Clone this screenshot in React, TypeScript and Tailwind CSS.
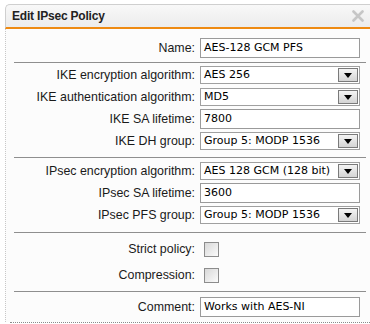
import React from "react";

type Row =
  | { kind: "text"; label: string; value: string }
  | { kind: "select"; label: string; value: string }
  | { kind: "check"; label: string };

const sections: { rows: Row[]; pt: string; pb: string; rowH: string }[] = [
  { pt: "pt-[8px]", pb: "pb-[3px]", rowH: "h-[22px]", rows: [{ kind: "text", label: "Name:", value: "AES-128 GCM PFS" }] },
  {
    pt: "pt-[1px]",
    pb: "pb-[5px]",
    rowH: "h-[22px]",
    rows: [
      { kind: "select", label: "IKE encryption algorithm:", value: "AES 256" },
      { kind: "select", label: "IKE authentication algorithm:", value: "MD5" },
      { kind: "text", label: "IKE SA lifetime:", value: "7800" },
      { kind: "select", label: "IKE DH group:", value: "Group 5: MODP 1536" },
    ],
  },
  {
    pt: "pt-[2px]",
    pb: "pb-[6px]",
    rowH: "h-[22px]",
    rows: [
      { kind: "select", label: "IPsec encryption algorithm:", value: "AES 128 GCM (128 bit)" },
      { kind: "text", label: "IPsec SA lifetime:", value: "3600" },
      { kind: "select", label: "IPsec PFS group:", value: "Group 5: MODP 1536" },
    ],
  },
  {
    pt: "pt-[3px]",
    pb: "pb-[3px]",
    rowH: "h-[26px]",
    rows: [
      { kind: "check", label: "Strict policy:" },
      { kind: "check", label: "Compression:" },
    ],
  },
  { pt: "pt-[4px]", pb: "pb-[4px]", rowH: "h-[22px]", rows: [{ kind: "text", label: "Comment:", value: "Works with AES-NI" }] },
];

const valueFont = { fontFamily: '"DejaVu Sans", Verdana, sans-serif' };

function Field({ row }: { row: Row }) {
  if (row.kind === "text") {
    return (
      <div className="w-[160px] h-[20px] border border-[#9a9a9a] bg-white flex items-center pl-[3px] text-[11px] text-black" style={valueFont}>
        {row.value}
      </div>
    );
  }
  if (row.kind === "select") {
    return (
      <div className="w-[160px] h-[18px] border border-[#a0a0a0] bg-white flex items-center justify-between pl-[3px] pr-[1px] text-[11px] text-black" style={valueFont}>
        <span className="whitespace-nowrap">{row.value}</span>
        <div className="w-[20px] h-[14px] border border-[#7a7a7a] bg-gradient-to-b from-[#f4f4f4] to-[#d4d4d4] flex items-center justify-center">
          <svg width="8" height="5" viewBox="0 0 8 5">
            <path d="M0 0 H8 L4 5 Z" fill="#000" />
          </svg>
        </div>
      </div>
    );
  }
  return <div className="w-[15px] h-[15px] ml-[4px] border border-[#8c8c8c] bg-gradient-to-br from-[#d8d8d8] to-[#fbfbfb]" />;
}

export default function App() {
  return (
    <div className="w-[370px] h-[324px] bg-white pt-[4px] pl-[5px] overflow-hidden" style={{ fontFamily: '"Liberation Sans", Arial, sans-serif' }}>
      <div className="flex flex-col">
        {/* header */}
        <div className="h-[25px] rounded-tl-[5px] border-t border-l border-[#cfcfcf] bg-gradient-to-b from-[#f8f8f8] to-[#ececec] border-b-2 border-b-[#ee8a12] flex items-center justify-between pl-[6px] pr-[6px]">
          <span className="text-[12px] font-bold text-[#222] tracking-[-0.2px]">Edit IPsec Policy</span>
          <svg width="12" height="12" viewBox="0 0 12 12" className="mb-[1px]">
            <path d="M1.5 1.5 L10.5 10.5 M10.5 1.5 L1.5 10.5" stroke="#c6c6c6" strokeWidth="2.6" strokeLinecap="round" />
          </svg>
        </div>

        {/* body */}
        <div className="border-l border-dotted border-[#c8c8c8] bg-[#fcfcfc] text-[12.4px] text-[#1a1a1a]">
          {sections.map((s, i) => (
            <div key={i}>
              {i > 0 && <div className="ml-[8px] mr-[4px] h-px bg-[#8f8f8f]" />}
              <div className={`${s.pt} ${s.pb}`}>
                {s.rows.map((r) => (
                  <div key={r.label} className={`${s.rowH} flex items-center gap-[5px]`}>
                    <div className="w-[189px] text-right whitespace-nowrap">{r.label}</div>
                    <Field row={r} />
                  </div>
                ))}
              </div>
            </div>
          ))}
        </div>
        <div className="ml-[5px] border-b border-dotted border-[#8a8a8a]" />
      </div>
    </div>
  );
}
